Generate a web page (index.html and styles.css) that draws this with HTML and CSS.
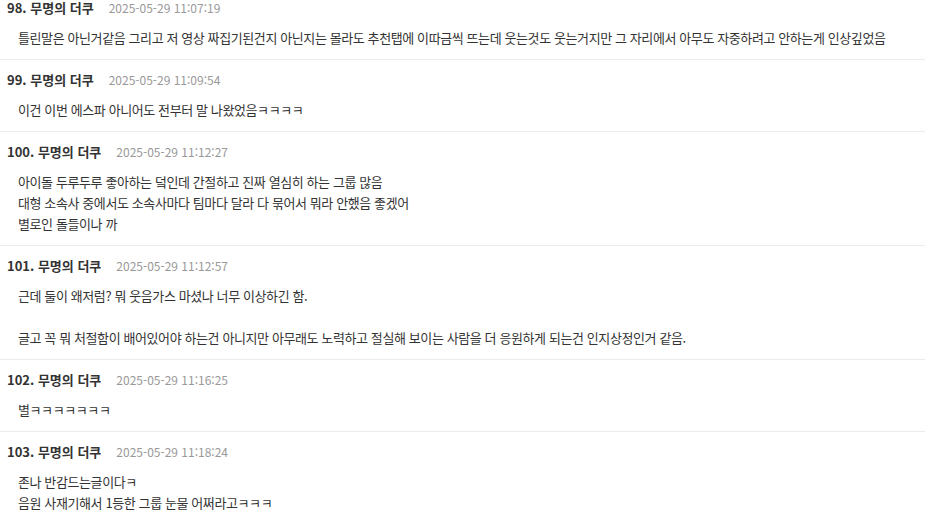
FILE: index.html
```html
<!DOCTYPE html>
<html lang="ko">
<head>
<meta charset="utf-8">
<link rel="stylesheet" href="styles.css">
</head>
<body>
<div class="list">
  <div class="item">
    <div class="head"><span class="name">98. 무명의 더쿠</span><span class="date">2025-05-29 11:07:19</span></div>
    <div class="body">틀린말은 아닌거같음 그리고 저 영상 짜집기된건지 아닌지는 몰라도 추천탭에 이따금씩 뜨는데 웃는것도 웃는거지만 그 자리에서 아무도 자중하려고 안하는게 인상깊었음</div>
  </div>
  <div class="item">
    <div class="head"><span class="name">99. 무명의 더쿠</span><span class="date">2025-05-29 11:09:54</span></div>
    <div class="body">이건 이번 에스파 아니어도 전부터 말 나왔었음ㅋㅋㅋㅋ</div>
  </div>
  <div class="item">
    <div class="head"><span class="name">100. 무명의 더쿠</span><span class="date">2025-05-29 11:12:27</span></div>
    <div class="body">아이돌 두루두루 좋아하는 덬인데 간절하고 진짜 열심히 하는 그룹 많음<br>대형 소속사 중에서도 소속사마다 팀마다 달라 다 묶어서 뭐라 안했음 좋겠어<br>별로인 돌들이나 까</div>
  </div>
  <div class="item">
    <div class="head"><span class="name">101. 무명의 더쿠</span><span class="date">2025-05-29 11:12:57</span></div>
    <div class="body">근데 둘이 왜저럼? 뭐 웃음가스 마셨나 너무 이상하긴 함.<br><br>글고 꼭 뭐 처절함이 배어있어야 하는건 아니지만 아무래도 노력하고 절실해 보이는 사람을 더 응원하게 되는건 인지상정인거 같음.</div>
  </div>
  <div class="item">
    <div class="head"><span class="name">102. 무명의 더쿠</span><span class="date">2025-05-29 11:16:25</span></div>
    <div class="body">별ㅋㅋㅋㅋㅋㅋㅋ</div>
  </div>
  <div class="item">
    <div class="head"><span class="name">103. 무명의 더쿠</span><span class="date">2025-05-29 11:18:24</span></div>
    <div class="body">존나 반감드는글이다ㅋ<br>음원 사재기해서 1등한 그룹 눈물 어쩌라고ㅋㅋㅋ</div>
  </div>
</div>
</body>
</html>
```
FILE: styles.css
```css
html, body {
  margin: 0;
  padding: 0;
  background: #fff;
}
body {
  font-family: "Noto Sans CJK KR", "Noto Sans", sans-serif;
  color: #333;
  overflow: hidden;
}
.list {
  margin-top: -12px;
}
.item {
  border-bottom: 1px solid #ebebeb;
  padding: 9px 0 11px 7px;
}
.head {
  display: flex;
  align-items: center;
  height: 20px;
  margin-bottom: 10px;
}
.name {
  font-size: 13px;
  font-weight: 700;
  color: #333;
}
.date {
  font-size: 12px;
  color: #999;
  margin-left: 15px;
}
.body {
  font-size: 13px;
  line-height: 21px;
  padding-left: 11px;
  letter-spacing: -0.4px;
  color: #333;
}
```
